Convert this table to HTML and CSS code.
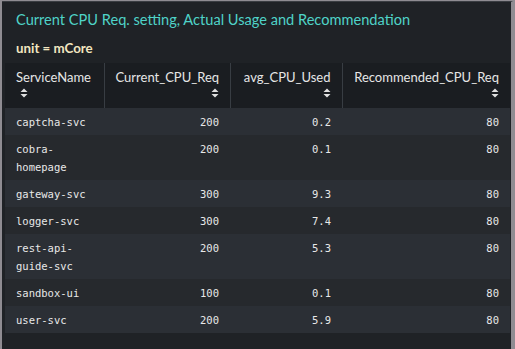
FILE: index.html
```html
<!DOCTYPE html>
<html>
<head>
<meta charset="utf-8">
<link rel="stylesheet" href="styles.css">
</head>
<body>
<div class="panel">
  <div class="title">Current CPU Req. setting, Actual Usage and Recommendation</div>
  <div class="unit">unit = mCore</div>
  <table class="grid">
    <colgroup>
      <col class="c1"><col class="c2"><col class="c3"><col class="c4">
    </colgroup>
    <thead>
      <tr>
        <th class="left">ServiceName<br><span class="sort first"><svg viewBox="0 0 8 10" width="8" height="10"><path d="M0.5 4 L4 0.5 L7.5 4 Z M0.5 6 L4 9.5 L7.5 6 Z"/></svg></span></th>
        <th>Current_CPU_Req<br><span class="sort"><svg viewBox="0 0 8 10" width="8" height="10"><path d="M0.5 4 L4 0.5 L7.5 4 Z M0.5 6 L4 9.5 L7.5 6 Z"/></svg></span></th>
        <th>avg_CPU_Used<br><span class="sort"><svg viewBox="0 0 8 10" width="8" height="10"><path d="M0.5 4 L4 0.5 L7.5 4 Z M0.5 6 L4 9.5 L7.5 6 Z"/></svg></span></th>
        <th>Recommended_CPU_Req<br><span class="sort"><svg viewBox="0 0 8 10" width="8" height="10"><path d="M0.5 4 L4 0.5 L7.5 4 Z M0.5 6 L4 9.5 L7.5 6 Z"/></svg></span></th>
      </tr>
    </thead>
    <tbody>
      <tr><td class="left">captcha-svc</td><td>200</td><td>0.2</td><td>80</td></tr>
      <tr><td class="left">cobra-<br>homepage</td><td>200</td><td>0.1</td><td>80</td></tr>
      <tr><td class="left">gateway-svc</td><td>300</td><td>9.3</td><td>80</td></tr>
      <tr><td class="left">logger-svc</td><td>300</td><td>7.4</td><td>80</td></tr>
      <tr><td class="left">rest-api-<br>guide-svc</td><td>200</td><td>5.3</td><td>80</td></tr>
      <tr><td class="left">sandbox-ui</td><td>100</td><td>0.1</td><td>80</td></tr>
      <tr><td class="left">user-svc</td><td>200</td><td>5.9</td><td>80</td></tr>
    </tbody>
  </table>
</div>
</body>
</html>
```
FILE: styles.css
```css
html, body {
  margin: 0;
  padding: 0;
  background: #8f8c92;
  height: 349px;
  overflow: hidden;
}
.panel {
  margin: 1px 2px 0 2px;
  height: 348px;
  background: #1f2226;
  border-top: 1px solid #3a3d42;
  border-right: 2px solid #8f8c92;
  padding: 0 0 0 3px;
  box-sizing: border-box;
}
.title {
  font-family: Lato, "Open Sans", sans-serif;
  font-size: 14.6px;
  line-height: 20px;
  color: #4fd3c8;
  padding: 8px 0 0 11px;
}
.unit {
  font-family: Lato, "Open Sans", sans-serif;
  font-weight: bold;
  font-size: 13.3px;
  line-height: 18px;
  color: #f2e6c0;
  padding: 9px 0 0 11px;
}
.grid {
  margin-top: 6px;
  width: 505px;
  border-collapse: collapse;
  table-layout: fixed;
}
.c1 { width: 99px; }
.c2 { width: 126px; }
.c3 { width: 112px; }
.c4 { width: 168px; }
th {
  background: #1a1d21;
  color: #e6e6e6;
  font-family: Lato, "Open Sans", sans-serif;
  font-weight: normal;
  font-size: 13px;
  line-height: 18px;
  padding: 5px 11px 4px 11px;
  text-align: right;
  vertical-align: top;
  border-left: 1px solid #383d43;
}
th:first-child { border-left: none; }
.left { text-align: left; }
.sort {
  display: inline-block;
  height: 18px;
  padding-top: 2px;
  box-sizing: border-box;
  vertical-align: top;
}
.sort svg { display: block; fill: #e0e0e0; }
.sort.first { margin-left: 4px; }
td {
  font-family: "DejaVu Sans Mono", monospace;
  font-size: 10.5px;
  line-height: 18px;
  color: #e8e8e8;
  padding: 5px 11px 4px 11px;
  text-align: right;
  vertical-align: top;
}
tbody tr:nth-child(odd) td { background: #2b2f35; }
tbody tr:nth-child(even) td { background: #26292d; }
```
